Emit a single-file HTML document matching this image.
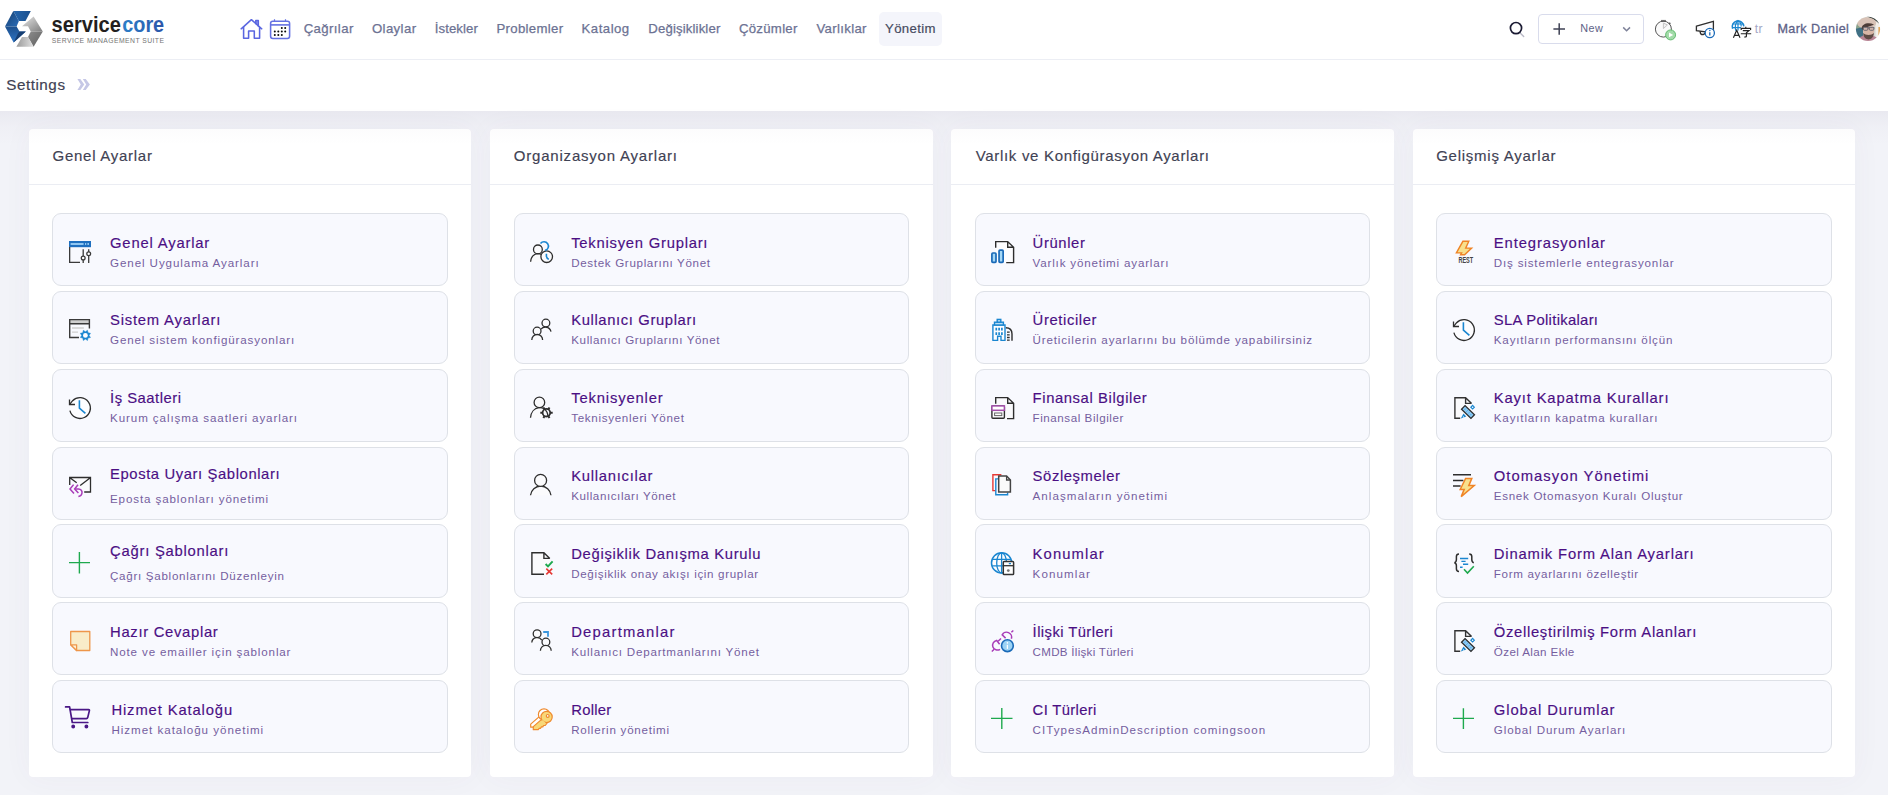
<!DOCTYPE html>
<html lang="tr"><head><meta charset="utf-8"><title>Settings</title>
<style>
html,body{margin:0;padding:0;}
body{width:1888px;height:795px;overflow:hidden;position:relative;background:#f2f3f8;font-family:"Liberation Sans", sans-serif;}
.t{position:absolute;white-space:nowrap;font-family:"Liberation Sans", sans-serif;}
.ct{font-size:14.8px;line-height:20px;color:#4b0f84;font-weight:400;-webkit-text-stroke:0.16px #4b0f84;}
.cs{font-size:11.6px;line-height:16px;color:#755e9e;font-weight:400;}
.pt{font-size:15.0px;line-height:21px;color:#3f4254;font-weight:400;-webkit-text-stroke:0.16px #3f4254;}
.nv{font-size:13.2px;line-height:19px;color:#6c7293;font-weight:400;-webkit-text-stroke:0.25px #6c7293;}
.na{font-size:13.2px;line-height:19px;color:#464a60;font-weight:400;-webkit-text-stroke:0.18px #464a60;}
.st{font-size:15.2px;line-height:21px;color:#3f4254;font-weight:400;-webkit-text-stroke:0.20px #3f4254;}
.nw{font-size:10.8px;line-height:16px;color:#5e6287;font-weight:400;}
.tr{font-size:12.0px;line-height:18px;color:#a3a6c4;font-weight:400;}
.us{font-size:12.6px;line-height:18px;color:#5e6287;font-weight:400;-webkit-text-stroke:0.30px #5e6287;}
.lg{font-size:23.0px;line-height:30px;color:#231f20;font-weight:700;}
.lc{font-size:23.0px;line-height:30px;color:#2b6cbb;font-weight:700;}
.tg{font-size:6.8px;line-height:11px;color:#747474;font-weight:400;}
#hdr{position:absolute;left:0;top:0;width:1888px;height:59px;background:#fff;border-bottom:1px solid #eceef4;}
#sub{position:absolute;left:0;top:60px;width:1888px;height:51px;background:#fff;}
#shade{position:absolute;left:0;top:111px;width:1888px;height:34px;background:linear-gradient(rgba(82,63,105,.055),rgba(82,63,105,.02) 45%,rgba(82,63,105,0));z-index:5;}
.panel{position:absolute;top:129px;height:648px;width:442px;background:#fff;border-radius:4px;box-shadow:0 0 30px 0 rgba(82,63,105,.045);}
.panel i{position:absolute;left:0;top:55px;width:100%;height:1px;background:#ebedf3;}
.card{position:absolute;width:396px;height:73px;box-sizing:border-box;background:#f8f9fe;border:1px solid #dee1e7;border-radius:9px;}
#pill{position:absolute;left:879px;top:12px;width:63px;height:34px;background:#f4f5fb;border-radius:5px;}
#newbtn{position:absolute;left:1538px;top:14px;width:106px;height:30px;box-sizing:border-box;border:1px solid #d9dcec;border-radius:4px;background:#fff;}
#ico{position:absolute;left:0;top:0;z-index:6;}
.t{z-index:7;}
#chev{position:absolute;left:0;top:0;}
</style></head>
<body>
<div id="hdr"></div><div id="sub"></div><div id="pill"></div><div id="newbtn"></div>
<div class="panel" style="left:29px;width:442px"><i></i></div>
<div class="card" style="left:52px;top:213px;width:396px;height:73px"></div>
<div class="card" style="left:52px;top:291px;width:396px;height:73px"></div>
<div class="card" style="left:52px;top:369px;width:396px;height:73px"></div>
<div class="card" style="left:52px;top:447px;width:396px;height:73px"></div>
<div class="card" style="left:52px;top:524px;width:396px;height:74px"></div>
<div class="card" style="left:52px;top:602px;width:396px;height:73px"></div>
<div class="card" style="left:52px;top:680px;width:396px;height:73px"></div>
<div class="panel" style="left:490px;width:443px"><i></i></div>
<div class="card" style="left:514px;top:213px;width:395px;height:73px"></div>
<div class="card" style="left:514px;top:291px;width:395px;height:73px"></div>
<div class="card" style="left:514px;top:369px;width:395px;height:73px"></div>
<div class="card" style="left:514px;top:447px;width:395px;height:73px"></div>
<div class="card" style="left:514px;top:524px;width:395px;height:74px"></div>
<div class="card" style="left:514px;top:602px;width:395px;height:73px"></div>
<div class="card" style="left:514px;top:680px;width:395px;height:73px"></div>
<div class="panel" style="left:951px;width:443px"><i></i></div>
<div class="card" style="left:975px;top:213px;width:395px;height:73px"></div>
<div class="card" style="left:975px;top:291px;width:395px;height:73px"></div>
<div class="card" style="left:975px;top:369px;width:395px;height:73px"></div>
<div class="card" style="left:975px;top:447px;width:395px;height:73px"></div>
<div class="card" style="left:975px;top:524px;width:395px;height:74px"></div>
<div class="card" style="left:975px;top:602px;width:395px;height:73px"></div>
<div class="card" style="left:975px;top:680px;width:395px;height:73px"></div>
<div class="panel" style="left:1413px;width:442px"><i></i></div>
<div class="card" style="left:1436px;top:213px;width:396px;height:73px"></div>
<div class="card" style="left:1436px;top:291px;width:396px;height:73px"></div>
<div class="card" style="left:1436px;top:369px;width:396px;height:73px"></div>
<div class="card" style="left:1436px;top:447px;width:396px;height:73px"></div>
<div class="card" style="left:1436px;top:524px;width:396px;height:74px"></div>
<div class="card" style="left:1436px;top:602px;width:396px;height:73px"></div>
<div class="card" style="left:1436px;top:680px;width:396px;height:73px"></div>
<div id="shade"></div>
<span id="t0" class="t tg" style="left:51.80px;top:35.00px;letter-spacing:0.439px;">SERVICE MANAGEMENT SUITE</span>
<span id="t1" class="t nv" style="left:303.70px;top:19.00px;letter-spacing:0.385px;">Çağrılar</span>
<span id="t2" class="t nv" style="left:371.90px;top:19.00px;letter-spacing:0.403px;">Olaylar</span>
<span id="t3" class="t nv" style="left:434.70px;top:19.00px;letter-spacing:0.098px;">İstekler</span>
<span id="t4" class="t nv" style="left:496.50px;top:19.00px;letter-spacing:0.315px;">Problemler</span>
<span id="t5" class="t nv" style="left:581.60px;top:19.00px;letter-spacing:0.478px;">Katalog</span>
<span id="t6" class="t nv" style="left:648.30px;top:19.00px;letter-spacing:0.137px;">Değişiklikler</span>
<span id="t7" class="t nv" style="left:738.90px;top:19.00px;letter-spacing:0.295px;">Çözümler</span>
<span id="t8" class="t nv" style="left:816.40px;top:19.00px;letter-spacing:0.339px;">Varlıklar</span>
<span id="t9" class="t na" style="left:885.10px;top:19.00px;letter-spacing:0.318px;">Yönetim</span>
<span id="t10" class="t st" style="left:6.20px;top:74.00px;letter-spacing:0.558px;">Settings</span>
<span id="t11" class="t nw" style="left:1580.20px;top:20.00px;letter-spacing:0.495px;">New</span>
<span id="t12" class="t tr" style="left:1754.70px;top:20.00px;letter-spacing:0.456px;">tr</span>
<span id="t13" class="t us" style="left:1777.40px;top:20.00px;letter-spacing:0.431px;">Mark Daniel</span>
<span id="t14" class="t pt" style="left:52.60px;top:145.00px;letter-spacing:0.724px;">Genel Ayarlar</span>
<span id="t15" class="t pt" style="left:513.80px;top:145.00px;letter-spacing:0.794px;">Organizasyon Ayarları</span>
<span id="t16" class="t pt" style="left:975.70px;top:145.00px;letter-spacing:0.685px;">Varlık ve Konfigürasyon Ayarları</span>
<span id="t17" class="t pt" style="left:1436.20px;top:145.00px;letter-spacing:0.747px;">Gelişmiş Ayarlar</span>
<span id="t18" class="t ct" style="left:110.00px;top:233.00px;letter-spacing:0.826px;">Genel Ayarlar</span>
<span id="t19" class="t cs" style="left:110.00px;top:255.00px;letter-spacing:0.910px;">Genel Uygulama Ayarları</span>
<span id="t20" class="t ct" style="left:110.00px;top:310.00px;letter-spacing:0.790px;">Sistem Ayarları</span>
<span id="t21" class="t cs" style="left:110.00px;top:332.00px;letter-spacing:0.863px;">Genel sistem konfigürasyonları</span>
<span id="t22" class="t ct" style="left:110.00px;top:388.00px;letter-spacing:0.520px;">İş Saatleri</span>
<span id="t23" class="t cs" style="left:110.00px;top:410.00px;letter-spacing:0.910px;">Kurum çalışma saatleri ayarları</span>
<span id="t24" class="t ct" style="left:110.00px;top:464.00px;letter-spacing:0.605px;">Eposta Uyarı Şablonları</span>
<span id="t25" class="t cs" style="left:110.00px;top:491.00px;letter-spacing:0.885px;">Eposta şablonları yönetimi</span>
<span id="t26" class="t ct" style="left:110.00px;top:541.00px;letter-spacing:0.764px;">Çağrı Şablonları</span>
<span id="t27" class="t cs" style="left:110.00px;top:568.00px;letter-spacing:0.713px;">Çağrı Şablonlarını Düzenleyin</span>
<span id="t28" class="t ct" style="left:110.00px;top:622.00px;letter-spacing:0.701px;">Hazır Cevaplar</span>
<span id="t29" class="t cs" style="left:110.00px;top:644.00px;letter-spacing:0.861px;">Note ve emailler için şablonlar</span>
<span id="t30" class="t ct" style="left:111.40px;top:700.00px;letter-spacing:0.873px;">Hizmet Kataloğu</span>
<span id="t31" class="t cs" style="left:111.40px;top:722.00px;letter-spacing:0.968px;">Hizmet kataloğu yönetimi</span>
<span id="t32" class="t ct" style="left:571.20px;top:233.00px;letter-spacing:0.760px;">Teknisyen Grupları</span>
<span id="t33" class="t cs" style="left:571.20px;top:255.00px;letter-spacing:0.669px;">Destek Gruplarını Yönet</span>
<span id="t34" class="t ct" style="left:571.20px;top:310.00px;letter-spacing:0.622px;">Kullanıcı Grupları</span>
<span id="t35" class="t cs" style="left:571.20px;top:332.00px;letter-spacing:0.630px;">Kullanıcı Gruplarını Yönet</span>
<span id="t36" class="t ct" style="left:571.20px;top:388.00px;letter-spacing:0.841px;">Teknisyenler</span>
<span id="t37" class="t cs" style="left:571.20px;top:410.00px;letter-spacing:0.693px;">Teknisyenleri Yönet</span>
<span id="t38" class="t ct" style="left:571.20px;top:466.00px;letter-spacing:0.727px;">Kullanıcılar</span>
<span id="t39" class="t cs" style="left:571.20px;top:488.00px;letter-spacing:0.584px;">Kullanıcıları Yönet</span>
<span id="t40" class="t ct" style="left:571.20px;top:544.00px;letter-spacing:0.692px;">Değişiklik Danışma Kurulu</span>
<span id="t41" class="t cs" style="left:571.20px;top:566.00px;letter-spacing:0.668px;">Değişiklik onay akışı için gruplar</span>
<span id="t42" class="t ct" style="left:571.20px;top:622.00px;letter-spacing:1.240px;">Departmanlar</span>
<span id="t43" class="t cs" style="left:571.20px;top:644.00px;letter-spacing:0.789px;">Kullanıcı Departmanlarını Yönet</span>
<span id="t44" class="t ct" style="left:571.20px;top:700.00px;letter-spacing:0.269px;">Roller</span>
<span id="t45" class="t cs" style="left:571.20px;top:722.00px;letter-spacing:0.762px;">Rollerin yönetimi</span>
<span id="t46" class="t ct" style="left:1032.60px;top:233.00px;letter-spacing:0.628px;">Ürünler</span>
<span id="t47" class="t cs" style="left:1032.60px;top:255.00px;letter-spacing:0.815px;">Varlık yönetimi ayarları</span>
<span id="t48" class="t ct" style="left:1032.60px;top:310.00px;letter-spacing:0.614px;">Üreticiler</span>
<span id="t49" class="t cs" style="left:1032.60px;top:332.00px;letter-spacing:0.829px;">Üreticilerin ayarlarını bu bölümde yapabilirsiniz</span>
<span id="t50" class="t ct" style="left:1032.60px;top:388.00px;letter-spacing:0.603px;">Finansal Bilgiler</span>
<span id="t51" class="t cs" style="left:1032.60px;top:410.00px;letter-spacing:0.554px;">Finansal Bilgiler</span>
<span id="t52" class="t ct" style="left:1032.60px;top:466.00px;letter-spacing:0.598px;">Sözleşmeler</span>
<span id="t53" class="t cs" style="left:1032.60px;top:488.00px;letter-spacing:1.022px;">Anlaşmaların yönetimi</span>
<span id="t54" class="t ct" style="left:1032.60px;top:544.00px;letter-spacing:1.110px;">Konumlar</span>
<span id="t55" class="t cs" style="left:1032.60px;top:566.00px;letter-spacing:1.082px;">Konumlar</span>
<span id="t56" class="t ct" style="left:1032.60px;top:622.00px;letter-spacing:0.427px;">İlişki Türleri</span>
<span id="t57" class="t cs" style="left:1032.60px;top:644.00px;letter-spacing:0.274px;">CMDB İlişki Türleri</span>
<span id="t58" class="t ct" style="left:1032.60px;top:700.00px;letter-spacing:0.347px;">CI Türleri</span>
<span id="t59" class="t cs" style="left:1032.60px;top:722.00px;letter-spacing:1.014px;">CITypesAdminDescription comingsoon</span>
<span id="t60" class="t ct" style="left:1493.80px;top:233.00px;letter-spacing:0.898px;">Entegrasyonlar</span>
<span id="t61" class="t cs" style="left:1493.80px;top:255.00px;letter-spacing:0.826px;">Dış sistemlerle entegrasyonlar</span>
<span id="t62" class="t ct" style="left:1493.80px;top:310.00px;letter-spacing:0.311px;">SLA Politikaları</span>
<span id="t63" class="t cs" style="left:1493.80px;top:332.00px;letter-spacing:0.825px;">Kayıtların performansını ölçün</span>
<span id="t64" class="t ct" style="left:1493.80px;top:388.00px;letter-spacing:0.838px;">Kayıt Kapatma Kuralları</span>
<span id="t65" class="t cs" style="left:1493.80px;top:410.00px;letter-spacing:0.832px;">Kayıtların kapatma kuralları</span>
<span id="t66" class="t ct" style="left:1493.80px;top:466.00px;letter-spacing:1.031px;">Otomasyon Yönetimi</span>
<span id="t67" class="t cs" style="left:1493.80px;top:488.00px;letter-spacing:0.692px;">Esnek Otomasyon Kuralı Oluştur</span>
<span id="t68" class="t ct" style="left:1493.80px;top:544.00px;letter-spacing:0.836px;">Dinamik Form Alan Ayarları</span>
<span id="t69" class="t cs" style="left:1493.80px;top:566.00px;letter-spacing:0.673px;">Form ayarlarını özelleştir</span>
<span id="t70" class="t ct" style="left:1493.80px;top:622.00px;letter-spacing:0.684px;">Özelleştirilmiş Form Alanları</span>
<span id="t71" class="t cs" style="left:1493.80px;top:644.00px;letter-spacing:0.392px;">Özel Alan Ekle</span>
<span id="t72" class="t ct" style="left:1493.80px;top:700.00px;letter-spacing:0.926px;">Global Durumlar</span>
<span id="t73" class="t cs" style="left:1493.80px;top:722.00px;letter-spacing:0.878px;">Global Durum Ayarları</span>
<svg id="ico" width="1888" height="795" viewBox="0 0 1888 795">
<path d="M77.4 79.1H80.3L84.3 84.5L80.3 90H77.4L80.8 84.5ZM82.8 79.1H85.7L89.9 84.5L85.7 90H82.8L86.2 84.5Z" fill="#c5c7e6"/>
<!-- ===== header ===== -->
<defs>
<linearGradient id="lgB1" x1="0" y1="0" x2="1" y2="1"><stop offset="0" stop-color="#163f6e"/><stop offset="1" stop-color="#2a6cb8"/></linearGradient>
<linearGradient id="lgB2" x1="0" y1="0" x2="1" y2="0"><stop offset="0" stop-color="#2566ad"/><stop offset="1" stop-color="#1a4f8e"/></linearGradient>
<linearGradient id="lgB3" x1="0" y1="0" x2="0" y2="1"><stop offset="0" stop-color="#1c4f8c"/><stop offset="1" stop-color="#2f74c4"/></linearGradient>
<linearGradient id="lgG1" x1="0" y1="0" x2="1" y2="1"><stop offset="0" stop-color="#e6e6e6"/><stop offset="1" stop-color="#7d7d7d"/></linearGradient>
<linearGradient id="lgG2" x1="0" y1="0" x2="1" y2="1"><stop offset="0" stop-color="#8c8c8c"/><stop offset="1" stop-color="#5e5e5e"/></linearGradient>
<linearGradient id="lgG3" x1="0" y1="0" x2="1" y2="0"><stop offset="0" stop-color="#9a9a9a"/><stop offset="1" stop-color="#e2e2e2"/></linearGradient>
<linearGradient id="lgCore" gradientUnits="userSpaceOnUse" x1="122" y1="0" x2="164" y2="0"><stop offset="0" stop-color="#2d7fc8"/><stop offset="1" stop-color="#2b55a8"/></linearGradient>
<filter id="avb" x="-10%" y="-10%" width="120%" height="120%"><feGaussianBlur stdDeviation="0.55"/></filter>
<clipPath id="avc"><circle cx="1868" cy="28.9" r="12.1"/></clipPath>
</defs>
<!-- logo mark -->
<g>
<path d="M13.3 11H30.8L25.5 21H18.9Z" fill="url(#lgB2)"/>
<path d="M13.3 11L18.9 21L16.6 26.4H5Z" fill="url(#lgB1)"/>
<path d="M5 26.4H16.6L19.5 31.4H25.8L13.6 42.6Z" fill="url(#lgB3)"/>
<path d="M19.5 31.4H25.8L13.6 42.6L18 33.4Z" fill="#173f73"/>
<path d="M33.6 16.4L42.8 31.4H30.8L28 26.2H22Z" fill="url(#lgG1)"/>
<path d="M30.8 31.4H42.8L33.6 46.8L28 37Z" fill="url(#lgG2)"/>
<path d="M22 37H28L33.6 46.8H16.4Z" fill="url(#lgG3)"/>
</g>
<!-- logo text -->
<text x="51.6" y="31.5" font-family="Liberation Sans, sans-serif" font-weight="bold" font-size="22" fill="#231f20" textLength="69.2" lengthAdjust="spacingAndGlyphs">service</text>
<text x="122.2" y="31.5" font-family="Liberation Sans, sans-serif" font-weight="bold" font-size="22" fill="url(#lgCore)" textLength="42" lengthAdjust="spacingAndGlyphs">core</text>
<!-- home -->
<g fill="none" stroke="#5a66e0" stroke-width="1.55" stroke-linejoin="round" stroke-linecap="round">
<path d="M255.8 23.6V20.5H258.3V26" fill="#98a0ee"/>
<path d="M241.2 28.8L251.4 19.7L261.7 28.8"/>
<path d="M243.6 27.2V38.2H248.6V31H254.3V38.2H259.6V27.2"/>
</g>
<!-- calendar -->
<g fill="none" stroke="#6470e2" stroke-width="1.55">
<rect x="270.6" y="21.2" width="19" height="17.2" rx="2.2"/>
<path d="M270.6 24.9H289.6" stroke-width="1.6"/>
<path d="M274.5 19.3V22M285.5 19.3V22" stroke-width="1.2"/>
<g fill="#0a0a0a" stroke="none">
<circle cx="281.8" cy="27.9" r="1"/><circle cx="285.2" cy="27.9" r="1"/>
<circle cx="274.8" cy="31.4" r="1"/><circle cx="278.3" cy="31.4" r="1"/><circle cx="281.8" cy="31.4" r="1"/><circle cx="285.2" cy="31.4" r="1"/>
<circle cx="274.8" cy="34.9" r="1"/><circle cx="278.3" cy="34.9" r="1"/><circle cx="281.8" cy="34.9" r="1"/>
</g>
</g>
<!-- search -->
<g fill="none" stroke-linecap="round">
<path d="M1520.4 33.2L1523.7 36.4" stroke="#b9b9c6" stroke-width="1.4"/>
<circle cx="1516" cy="28.1" r="5.6" stroke="#1b1b33" stroke-width="1.7"/>
</g>
<!-- new button glyphs -->
<g fill="none" stroke="#3f4254" stroke-width="1.5">
<path d="M1559.2 23.2V34.8M1553.4 29H1565"/>
<path d="M1623.2 27.4L1626.6 30.8L1630 27.4" stroke="#7e8299"/>
</g>
<!-- timer -->
<g fill="none" stroke="#555" stroke-width="1">
<circle cx="1663.4" cy="29.1" r="8" fill="#fafafa"/>
<path d="M1661 20.4H1665.8L1664.6 21.5H1662.2Z" fill="#555" stroke-width="0.6"/>
<path d="M1669.2 22.8L1670.3 23.9" stroke-width="1.5"/>
<path d="M1663.4 23.1V28.6L1667.4 24.9Z" stroke="#c4c4c4" fill="#f1f1f1" stroke-linejoin="round"/>
<circle cx="1670.6" cy="34.9" r="5" fill="#a2dba8" stroke="#5cb86a" stroke-width="0.9"/>
<path d="M1669 32.5L1673.2 34.9L1669 37.3Z" fill="#fff" stroke="none"/>
</g>
<!-- megaphone -->
<g fill="none" stroke="#2e2e2e" stroke-width="1.3">
<path d="M1696.4 26.2L1713.4 21.4V33L1696.4 30.6Z" fill="#fbfbfd"/>
<path d="M1700.3 31.4C1699.8 34 1701.6 35 1703.8 34.4L1705 33" stroke-width="1.5"/>
<circle cx="1709.8" cy="33" r="4.6" fill="#fff" stroke="#1a6ab8" stroke-width="1.3"/>
<path d="M1709.8 32.2V35.5" stroke="#1a6ab8" stroke-width="1.3"/>
<circle cx="1709.8" cy="30.6" r="0.75" fill="#1a6ab8" stroke="none"/>
</g>
<!-- language -->
<g fill="none" stroke="#1a86d0" stroke-width="1.2">
<g transform="translate(0,1)">
<path d="M1732.6 27.8A5.8 5.8 0 1 1 1743.8 25.4" stroke-width="1.5"/>
<path d="M1735.8 29.8C1734.6 26.5 1735.4 21.6 1738 19.6C1740.6 21.2 1741.2 23.4 1741.2 25.4M1738 19.6V29.6M1732.8 23H1743.2M1732.4 26.6H1741"/>
</g>
<g stroke="#222" stroke-width="1.15">
<path d="M1733.4 37.8L1736.7 30.2L1740 37.8M1734.6 35.3H1738.8"/>
<path d="M1745.8 26.8V28.4M1741.2 30V28.4H1750.6V30M1742.8 30.6H1749L1746.4 32.8V36.2Q1746.4 37.2 1744.2 37M1740.8 33.7H1751.2"/>
</g>
</g>
<!-- avatar -->
<g clip-path="url(#avc)"><g filter="url(#avb)">
<rect x="1854" y="15" width="28" height="28" fill="#d6d8d2"/>
<rect x="1854" y="15" width="9" height="28" fill="#8aa38c"/>
<path d="M1855 29L1863 27V40H1855Z" fill="#3f6f84"/>
<rect x="1875.5" y="21" width="7" height="22" fill="#f3efe9"/>
<rect x="1878.4" y="27" width="3" height="9" fill="#dfa45a"/>
<path d="M1866 16H1882V26L1876 21Z" fill="#2c3632"/>
<ellipse cx="1868" cy="44" rx="11.5" ry="9.5" fill="#b78494"/>
<ellipse cx="1868.6" cy="30.5" rx="5.6" ry="6.8" fill="#d8b6a6"/>
<path d="M1863 33C1863.6 38 1866.4 39.4 1868.6 39.4C1870.8 39.4 1873.4 38 1874 33C1871.6 35.6 1865.6 35.6 1863 33Z" fill="#5f4b45"/>
<ellipse cx="1866.6" cy="23" rx="9.6" ry="5.8" fill="#d8c2b6"/>
<path d="M1861.6 28.4C1862 24 1868 21.8 1874 24.6C1872 26.4 1866.4 26 1863 30Z" fill="#4d3d39"/>
<path d="M1862.6 27.9H1874.4" stroke="#55535c" stroke-width="1.2"/>
<rect x="1863.4" y="27.3" width="4.4" height="3" rx="1" fill="#cdb3ab" stroke="#5a5a66" stroke-width="0.8"/>
<rect x="1869.4" y="27.3" width="4.4" height="3" rx="1" fill="#cdb3ab" stroke="#5a5a66" stroke-width="0.8"/>
</g></g>

<!-- ===== column 1 ===== -->
<!-- Genel Ayarlar: settings window -->
<g fill="none" stroke="#3a3a3a" stroke-width="1.3">
<rect x="69" y="241" width="22" height="6.2" fill="#1e6fbf" stroke="none"/>
<rect x="70.6" y="243" width="13" height="2" fill="#8fc6f2" stroke="none"/>
<rect x="85" y="243" width="1.2" height="2" fill="#8fc6f2" stroke="none"/>
<rect x="87.4" y="243" width="1.6" height="2" fill="#8fc6f2" stroke="none"/>
<path d="M69.65 247V262.3H80"/>
<path d="M83.2 249.3V263M88.7 249.3V263"/>
<circle cx="83.2" cy="258" r="1.9" fill="#fff"/>
<circle cx="88.7" cy="253.8" r="1.9" fill="#fff"/>
</g>
<!-- Sistem Ayarlari: window + gear -->
<g fill="none" stroke="#3a3a3a" stroke-width="1.4">
<rect x="70" y="320" width="19" height="3.4" fill="#cfcfcf" stroke="none"/>
<path d="M72 328H83.8M72 332.2H78" stroke="#cfcfcf" stroke-width="1.3"/>
<path d="M79 337.5H69.7V319.6H89.4V328.6M69.7 323.8H89.4"/>
<path fill="#1a86d0" stroke="#1a86d0" stroke-width="0.5" stroke-linejoin="round" d="M90.48 337.50L88.02 338.02L87.50 340.48L85.40 339.10L83.30 340.48L82.78 338.02L80.32 337.50L81.70 335.40L80.32 333.30L82.78 332.78L83.30 330.32L85.40 331.70L87.50 330.32L88.02 332.78L90.48 333.30L89.10 335.40Z"/>
<circle cx="85.4" cy="335.4" r="2.4" fill="#fdfdff" stroke="none"/>
</g>
<!-- Is Saatleri: history clock -->
<g id="hclock" fill="none" stroke="#2e2e2e" stroke-width="1.3">
<circle cx="80" cy="408" r="10.2" fill="#fdfdff" stroke="none"/>
<path d="M69.9 410.6A10.4 10.4 0 1 0 72.6 400.7L69.7 404.3"/>
<path d="M69.5 399.4V404.5H75"/>
<path d="M79.4 400.3V408.2L85.4 413.4" stroke="#1a86d0" stroke-width="1.6"/>
</g>
<!-- Eposta: envelope + reply-all -->
<g fill="none" stroke="#2e2e2e" stroke-width="1.3">
<path d="M77 482.5L70 478H90V491.6H84.5Z" fill="#fbfbfd" stroke="none"/>
<path d="M69.7 485V477.5H90.5V492H84.2M69.9 477.7L76.7 482.7M90.3 477.7L80.2 485.6"/>
<g stroke="#a83cb8" stroke-width="1.5">
<path d="M73.6 484.6L70 489L74 493.4M78 484.8L74.6 489L78.4 493"/>
<path d="M75.2 489H78.5C81 489 82.3 491 82 493C81.7 495 80.4 496.3 78.4 496.6"/>
</g>
</g>
<!-- Cagri Sablonlari: plus -->
<path d="M79.4 552V573.5M69 562.6H90" fill="none" stroke="#1ea94e" stroke-width="1.4"/>
<!-- Hazir Cevaplar: note -->
<g stroke="#ee964a" stroke-width="1.3" stroke-linejoin="round">
<path d="M70.7 631.5H89.8V650.5H76.6L70.7 644.8Z" fill="#f9ecc8"/>
<path d="M70.7 644.8H76.6V650.5Z" fill="#fdf3d6"/>
</g>
<!-- Hizmet Katalogu: cart -->
<g fill="none" stroke="#4a1886" stroke-width="1.7" stroke-linecap="round" stroke-linejoin="round">
<path d="M65.6 706.9H69.6L72.3 722.5H87.8"/>
<path d="M70.4 709.6H88.6Q89.6 709.6 89.4 710.6L87.7 717.6Q87.4 718.6 86.4 718.6H71.9"/>
<circle cx="73.2" cy="726.5" r="1.1" fill="#4a1886"/>
<circle cx="86.4" cy="726.5" r="1.1" fill="#4a1886"/>
</g>

<!-- ===== column 2 ===== -->
<!-- Teknisyen Gruplari -->
<g fill="none" stroke="#2e2e2e" stroke-width="1.3">
<path d="M531 262C531.5 257 534 254 538 253.6L543 256L541 262Z" fill="#fafafc" stroke="none"/>
<circle cx="537.9" cy="249.4" r="4.4" fill="#fbfbfd"/>
<path d="M530.6 261.8C531 257 533.6 254.3 537.6 253.7Q539.8 253.6 541.4 254.5"/>
<circle cx="546.7" cy="256.7" r="5.8" fill="#fbfbfd"/>
<path d="M540.5 243.5A4.4 4.4 0 1 1 545.1 250.4" stroke="#1a86d0" stroke-width="1.6"/>
<path d="M546.4 253.8V256.4Q546.7 258.3 548.8 259.4" stroke="#1a86d0" stroke-width="1.6"/>
</g>
<!-- Kullanici Gruplari -->
<g fill="#fbfbfd" stroke="#2e2e2e" stroke-width="1.3">
<circle cx="545.9" cy="323.1" r="3.9"/>
<path d="M541 329.2C543 326.6 549.6 325.8 551 331.6"/>
<circle cx="537.1" cy="331.1" r="3.9"/>
<path d="M531.8 339.9A5.4 5.4 0 0 1 542.6 339.9"/>
</g>
<!-- Teknisyenler -->
<g fill="none" stroke="#2e2e2e" stroke-width="1.3">
<path d="M531 418C531.5 412 535 408.5 539.4 407.9L546 409L544 418Z" fill="#fafafc" stroke="none"/>
<circle cx="539.4" cy="402.4" r="5.3" fill="#fbfbfd"/>
<path d="M530.5 417.8C530.9 412.2 534.4 408.3 539 407.7Q541.6 407.5 543.8 408.3C546.4 410.5 547.9 413.4 548 416.6"/>
<circle cx="546.4" cy="412.7" r="3.8" stroke-width="1.8"/>
<path d="M540.3 412.7H542.3M550.5 412.7H552.7M543.4 407.5L544.4 409.3M548.4 416.2L549.5 418M549.5 407.5L548.4 409.3M544.4 416.2L543.4 418" stroke-width="2"/>
</g>
<!-- Kullanicilar -->
<g fill="#fbfbfd" stroke="#2e2e2e" stroke-width="1.3">
<path d="M530.5 495.3A10.3 10.3 0 0 1 551 495.3"/>
<circle cx="540.6" cy="480.4" r="6"/>
</g>
<!-- Degisiklik Danisma Kurulu -->
<g fill="none" stroke="#2e2e2e" stroke-width="1.4">
<path d="M531.9 552.7H543.9L549.8 558.4V574H531.9Z" fill="#fafafc" stroke="none"/>
<path d="M544 574.2H531.9V552.7H543.9L549.8 558.4M543.9 552.7V558.4H549.8"/>
<path d="M545.6 564L548 566.4L552.6 561.4" stroke="#1ea94e" stroke-width="1.9"/>
<path d="M546.3 568.6L552.2 574.4M552.2 568.6L546.3 574.4" stroke="#e53935" stroke-width="1.6"/>
</g>
<!-- Departmanlar -->
<g fill="#fbfbfd" stroke="#2e2e2e" stroke-width="1.3">
<circle cx="537.1" cy="633.8" r="3.9"/>
<path d="M531.8 642.5A5.4 5.4 0 0 1 541.8 640.2"/>
<circle cx="545.9" cy="642.1" r="3.9"/>
<path d="M540.4 650.7A5.4 5.4 0 0 1 551.2 650.7"/>
<path d="M543.2 632H548V636.7" fill="none" stroke="#3a96dd" stroke-width="1.8"/>
</g>
<!-- Roller: keys -->
<g stroke="#ef8a2e" stroke-width="1.2" stroke-linejoin="round">
<g transform="translate(-2.6,-2.5)" fill="#fff">
<path d="M541.6 719.4L533.3 726.6V729.7H538.2L539.2 728.3H540.6L541.4 726.9H542.8L543.6 725.5H545.2L547.2 723Z"/>
<circle cx="546.6" cy="717" r="5.6"/>
</g>
<path d="M541.6 719.4L533.3 726.6V729.7H538.2L539.2 728.3H540.6L541.4 726.9H542.8L543.6 725.5H545.2L547.2 723Z" fill="#f8d878"/>
<circle cx="546.6" cy="717" r="5.6" fill="#f8d878"/>
<path d="M542.2 720L545.6 722.6L541 726L538 727.5Z" fill="#f8d878" stroke="none"/>
<circle cx="547.7" cy="715.9" r="1.4" fill="#fff"/>
</g>

<!-- ===== column 3 ===== -->
<!-- Urunler -->
<g fill="none" stroke="#2e2e2e" stroke-width="1.4">
<path d="M995.7 241.6H1007.7L1013.6 247.2V262.6H995.7Z" fill="#fdfdff" stroke="none"/>
<path d="M995.7 247.8V241.6H1007.7L1013.6 247.2V262.6H1006.2M1007.7 241.6V247.2H1013.6"/>
<rect x="991.9" y="253" width="4.1" height="9.3" rx="0.9" fill="#a5d8f6" stroke="#1a6ab8" stroke-width="1.7"/>
<rect x="999.05" y="250.2" width="4.1" height="12.1" rx="0.9" fill="#a5d8f6" stroke="#1a6ab8" stroke-width="1.7"/>
</g>
<!-- Ureticiler -->
<g fill="none" stroke="#1a86d0" stroke-width="1.4">
<path d="M992.9 325H1005V340.4H992.9Z" fill="#fdfdff" stroke="none"/>
<path d="M1005.8 327.7C1009.6 327.7 1012 330.2 1012 334V340.8" stroke="#2e2e2e"/>
<path d="M1007 332.1H1009.7M1007 334.8H1009.7M1007 337.5H1009.7M1007 340.2H1009.7" stroke="#2e2e2e" stroke-width="1.3"/>
<path d="M992.9 340.4V325H1005V340.4M992.3 340.4H997.6V336.2H1001V340.4H1005.6"/>
<rect x="994.5" y="322.2" width="8.9" height="2.8" fill="#b9dcf4"/>
<rect x="997.2" y="319.4" width="3.6" height="2.8" fill="#b9dcf4"/>
<path d="M996.3 327.8V330.6M999.1 327.8V330.6M1001.9 327.8V330.6M996.3 332.2V335M999.1 332.2V335M1001.9 332.2V335" stroke-width="1.7"/>
</g>
<!-- Finansal Bilgiler -->
<g fill="none" stroke="#2e2e2e" stroke-width="1.4">
<path d="M995.7 397.6H1007.7L1013.6 403.2V418.6H995.7Z" fill="#fafafc" stroke="none"/>
<path d="M995.7 403.8V397.6H1007.7L1013.6 403.2V418.6H1007M1007.7 397.6V403.2H1013.6"/>
<rect x="991.9" y="405.9" width="12.5" height="12.3" rx="1" fill="#fdfdff"/>
<rect x="994.6" y="413" width="7.2" height="2.6" stroke="#666" stroke-width="1" fill="#fff"/>
<rect x="991.9" y="405.9" width="12.5" height="4.4" fill="#fff" stroke="#a24eaa" stroke-width="1.5"/>
</g>
<!-- Sozlesmeler -->
<g fill="none" stroke-width="1.4">
<path d="M1001.4 474.7H992.9V490.6H995.4" stroke="#e53935"/>
<path d="M998 478.9H995.8V494.7H1007.6V492.4" stroke="#1a86d0"/>
<path d="M998.7 476.1H1006.6L1010.4 480V492H998.7Z" fill="#fafafa" stroke="#444" stroke-width="1.5"/>
<path d="M1006.6 476.1V480H1010.4" stroke="#444" stroke-width="1.3"/>
</g>
<!-- Konumlar -->
<g fill="none" stroke="#1a86d0" stroke-width="1.3">
<circle cx="1001.6" cy="562.9" r="10.1" fill="#fdfdff" stroke-width="1.5"/>
<ellipse cx="1001.6" cy="562.9" rx="4.9" ry="10.1"/>
<path d="M1001.6 552.8V573M992.2 559.3H1011M992.2 565.9H1011"/>
<rect x="1003.3" y="561.6" width="10.3" height="12.9" rx="0.8" fill="#fff" stroke="#333" stroke-width="1.5"/>
<path d="M1003.3 565.7H1013.6" stroke="#333" stroke-width="1.3"/>
<path d="M1008.8 563.6H1011" stroke-width="1.3"/>
<circle cx="1008.3" cy="570.6" r="1.4" fill="#777" stroke="none"/>
</g>
<!-- Iliski Turleri -->
<g fill="none" stroke="#a83cb8" stroke-width="1.5">
<path d="M1005.6 638.1L1002.2 634.9A5 5 0 0 1 1011.4 638.7"/>
<path d="M1011.4 632.3L1013.3 630.5"/>
<path d="M999.6 644.2L996.6 640.4A4.85 4.85 0 1 0 1000 649.3"/>
<path d="M998.1 641.2L1001 638.5M994.2 649.3L991.8 651.5"/>
<circle cx="1007.4" cy="645.7" r="5.9" fill="#9cd3f5" stroke="#1a6ab8" stroke-width="1.6"/>
<path d="M1007.4 644.8V648.9" stroke="#fff" stroke-width="1.3"/>
<circle cx="1007.4" cy="642.9" r="0.8" fill="#fff" stroke="none"/>
</g>
<!-- CI Turleri: plus -->
<path d="M1001.8 708V729M991 718.4H1012.5" fill="none" stroke="#1ea94e" stroke-width="1.4"/>

<!-- ===== column 4 ===== -->
<!-- Entegrasyonlar: bolt + REST -->
<path d="M1462.9 241.3H1468.8L1465.7 248.1H1471.6L1464.6 254.7H1460.6L1461.6 252.9H1456.4Z" fill="#f8e08c" stroke="#ef8426" stroke-width="1.4" stroke-linejoin="miter"/>
<text x="1465.8" y="262.7" font-family="Liberation Sans, sans-serif" font-weight="bold" font-size="9.6" text-anchor="middle" fill="#444" textLength="14.8" lengthAdjust="spacingAndGlyphs">REST</text>
<!-- SLA Politikalari: history clock (same as col1 row3) -->
<g transform="translate(1384,-78)"><g fill="none" stroke="#2e2e2e" stroke-width="1.3">
<circle cx="80" cy="408" r="10.2" fill="#fdfdff" stroke="none"/>
<path d="M69.9 410.6A10.4 10.4 0 1 0 72.6 400.7L69.7 404.3"/>
<path d="M69.5 399.4V404.5H75"/>
<path d="M79.4 400.3V408.2L85.4 413.4" stroke="#1a86d0" stroke-width="1.6"/>
</g></g>
<!-- Kayit Kapatma Kurallari: doc + ruler -->
<g id="docruler" fill="none" stroke="#333" stroke-width="1.4">
<path d="M1454.9 397.7H1465.6L1471.6 403.4V418H1454.9Z" fill="#fafafc" stroke="none"/>
<path d="M1460.2 418.2H1454.9V397.7H1465.6L1471.6 403.4M1465.6 397.7V403.4H1471.6"/>
<g transform="translate(1468,412) rotate(44.5)">
<rect x="-6.6" y="-2.5" width="13.2" height="5" fill="#8ccaf3" stroke="#2e2e2e" stroke-width="1.3"/>
<path d="M-4 -1V1M-1.4 -1V1M1.2 -1V1M3.8 -1V1" stroke="#4aa3e6" stroke-width="0.9"/>
</g>
<path d="M1472.6 404.6L1475.1 407.3L1472.6 409.8L1470 407.3Z" fill="#1a86d0" stroke="none"/>
<circle cx="1472.6" cy="407.2" r="0.8" fill="#fff" stroke="none"/>
<path d="M1463.5 413.6L1466.3 416.5L1460.8 418.6Z" fill="#1a86d0" stroke="none"/>
<circle cx="1463.4" cy="416.9" r="0.6" fill="#fff" stroke="none"/>
</g>
<!-- Otomasyon Yonetimi: lines + bolt -->
<g fill="none" stroke="#2e2e2e" stroke-width="1.5">
<path d="M1453 474.7H1471M1453 480.4H1463.4M1453 486.1H1460.6"/>
<path d="M1465.6 478.4H1471.8L1468.8 485.6H1474.2L1461.2 496.6L1464.2 489.4H1460.2Z" fill="#f8e08c" stroke="#ef8426" stroke-width="1.5"/>
</g>
<!-- Dinamik Form Alan Ayarlari: braces -->
<g fill="none" stroke="#2e2e2e" stroke-width="1.5">
<path d="M1459 553.9C1456.8 553.9 1456.4 555 1456.4 556.6V559.6C1456.4 561.6 1455.8 562.4 1454.4 562.7C1455.8 563 1456.4 563.8 1456.4 565.8V568.8C1456.4 570.4 1456.8 571.5 1459 571.5"/>
<path d="M1469.2 553.9C1471.4 553.9 1471.8 555 1471.8 556.6V559.6C1471.8 561.6 1472.4 562.4 1473.8 562.7"/>
<path d="M1460 558.5H1468.2M1461.4 561.4H1465.6M1463 564.3H1468.2M1460 567.2H1462.6" stroke="#1a86d0" stroke-width="1.4"/>
<path d="M1464 569.3L1467.5 573L1473.8 566.2" stroke="#1ea94e" stroke-width="1.6"/>
</g>
<!-- Ozellestirilmis Form Alanlari: doc + ruler again -->
<g transform="translate(0,233)"><g fill="none" stroke="#333" stroke-width="1.4">
<path d="M1454.9 397.7H1465.6L1471.6 403.4V418H1454.9Z" fill="#fafafc" stroke="none"/>
<path d="M1460.2 418.2H1454.9V397.7H1465.6L1471.6 403.4M1465.6 397.7V403.4H1471.6"/>
<g transform="translate(1468,412) rotate(44.5)">
<rect x="-6.6" y="-2.5" width="13.2" height="5" fill="#8ccaf3" stroke="#2e2e2e" stroke-width="1.3"/>
<path d="M-4 -1V1M-1.4 -1V1M1.2 -1V1M3.8 -1V1" stroke="#4aa3e6" stroke-width="0.9"/>
</g>
<path d="M1472.6 404.6L1475.1 407.3L1472.6 409.8L1470 407.3Z" fill="#1a86d0" stroke="none"/>
<circle cx="1472.6" cy="407.2" r="0.8" fill="#fff" stroke="none"/>
<path d="M1463.5 413.6L1466.3 416.5L1460.8 418.6Z" fill="#1a86d0" stroke="none"/>
<circle cx="1463.4" cy="416.9" r="0.6" fill="#fff" stroke="none"/>
</g></g>
<!-- Global Durumlar: plus -->
<path d="M1463.4 708.2V729M1453 718.4H1474" fill="none" stroke="#1ea94e" stroke-width="1.4"/>

</svg>
</body></html>
